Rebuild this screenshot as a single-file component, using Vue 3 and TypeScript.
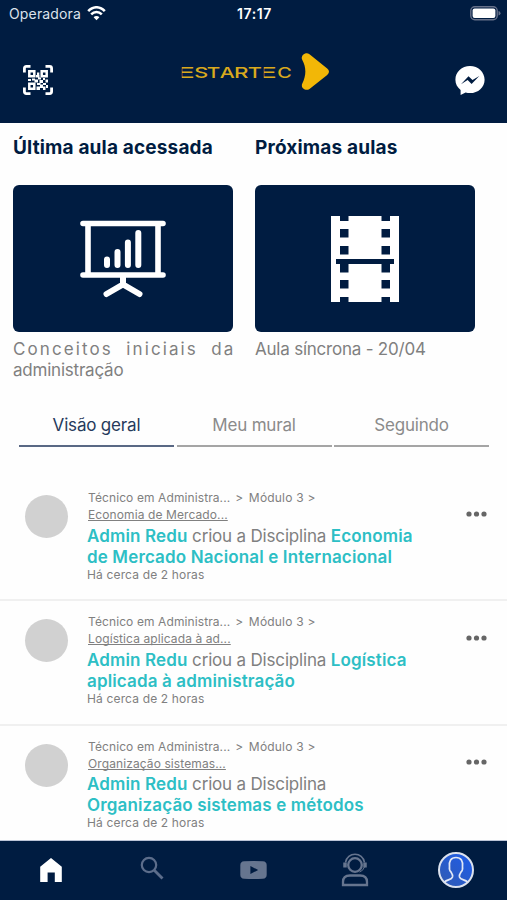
<script setup lang="ts">
interface Activity {
  subject: string
  title: string
}

interface Glyph {
  char: string
  x: number
  width: number
}

const activities: Activity[] = [
  { subject: 'Economia de Mercado...', title: 'Economia de Mercado Nacional e Internacional' },
  { subject: 'Logística aplicada à ad...', title: 'Logística aplicada à administração' },
  { subject: 'Organização sistemas...', title: 'Organização sistemas e métodos' },
]

const tabs = ['Visão geral', 'Meu mural', 'Seguindo']
const brand: Glyph[] = [
  { char: 'E', x: 0, width: 19 },
  { char: 'S', x: 18.2, width: 14 },
  { char: 'T', x: 30.7, width: 13.5 },
  { char: 'A', x: 43.8, width: 15 },
  { char: 'R', x: 58, width: 14.5 },
  { char: 'T', x: 71.7, width: 14.2 },
  { char: 'E', x: 82, width: 19 },
  { char: 'C', x: 101.3, width: 14.5 },
]
const holes = [0, 13, 30, 48, 64, 81]
</script>

<template>
  <div class="screen">
    <header class="header">
      <div class="status">
        <div class="carrier">
          <span>Operadora</span>
          <svg width="19" height="15" viewBox="0 0 19 15" fill="none" stroke="#fff" stroke-width="2.5">
            <path d="M1.2 5.2C6-.1 13-.1 17.8 5.2" />
            <path d="M4.2 8.4c3-3.2 7.6-3.2 10.6 0" />
            <path d="M9.5 14.2 6.6 11.2c1.6-1.6 4.2-1.6 5.8 0z" fill="#fff" stroke="none" />
          </svg>
        </div>
        <strong class="clock">17:17</strong>
        <svg class="battery" width="31" height="15" viewBox="0 0 31 15">
          <rect x=".8" y=".8" width="26.4" height="13" rx="4" fill="none" stroke="#66718a" stroke-width="1.4" />
          <rect x="2.6" y="2.6" width="22.8" height="9.4" rx="2" fill="#fff" />
          <path d="M28.5 5q2 .6 2 2.3t-2 2.3z" fill="#66718a" />
        </svg>
      </div>
      <div class="brandbar">
        <svg class="qr" width="30" height="30" viewBox="0 0 30 30">
          <g fill="none" stroke="#fff" stroke-width="2.8">
            <path d="M1.4 7.5V3.4q0-2 2-2h4.1M22.5 1.4h4.1q2 0 2 2v4.1M28.6 22.5v4.1q0 2-2 2h-4.1M7.5 28.6H3.4q-2 0-2-2v-4.1" />
            <path d="M6.3 6.3h5v5h-5zM18.7 6.3h5v5h-5zM6.3 18.7h5v5h-5z" stroke-width="2.5" />
          </g>
          <path d="M14 7.5h2.3v3H14zM13 10h3.5v2.5H13zM5 14h3v2H5zM9 13.5h3v2H9zM11.5 14.5H15v3h-3.5zM15 12.5h3v2h-3zM16.5 15H20v3h-3.5zM20 13h2v2h-2zM22.5 14.5H25v3h-2.5zM14 18h3.5v2H14zM20 18h3v2h-3zM13.5 21.5H17V25h-3.5zM17 19.5h3v3.5h-3zM20 21.5h2.5V25H20zM23 20h2v3h-2z" fill="#fff" />
        </svg>
        <div class="brand">
          <svg width="117" height="18" viewBox="0 0 117 18">
            <template v-for="(g, i) in brand" :key="i">
              <text v-if="g.char === 'E'" class="glyph" :x="g.x" y="14.5" :textLength="g.width" lengthAdjust="spacingAndGlyphs">{{ g.char }}</text>
              <rect v-if="g.char === 'E'" :x="g.x" y="2" width="5.8" height="14" fill="#001c41" />
            </template>
            <template v-for="(g, i) in brand" :key="i">
              <text v-if="g.char !== 'E'" class="glyph" :x="g.x" y="14.5" :textLength="g.width" lengthAdjust="spacingAndGlyphs">{{ g.char }}</text>
            </template>
          </svg>
          <svg width="29" height="38" viewBox="0 0 29 38">
            <path d="M8.5 1.2 26.2 15.5q3.6 3.2 0 6.4L8.5 35.9C4.5 38.5-.5 34.8 1.2 30.8 5.3 22.4 5.5 14.8 1.2 6.8-.8 2.6 4.6-1.7 8.5 1.2z" fill="#f2b707" />
          </svg>
        </div>
        <svg class="chat" width="30" height="31" viewBox="0 0 30 31">
          <path d="M15 1C6.8 1 .4 6.9.4 14.7c0 4.3 1.9 7.6 5.2 10.2v5.2l5-2.6c1.4.4 2.9.6 4.4.6 8.2 0 14.6-5.9 14.6-13.4S23.200 1 15 1z" fill="#fff" />
          <path d="m6 19.2 7.5-8 4 3.7 6.8-3.9-7.7 8-4-3.9z" fill="#001c41" />
        </svg>
      </div>
    </header>

    <main>
      <section class="lessons">
        <article>
          <h2>Última aula acessada</h2>
          <div class="tile">
            <svg width="86" height="78" viewBox="0 0 86 78" fill="none" stroke="#fff" stroke-width="6" stroke-linecap="round">
              <path d="M3 3.5h80M3 55h80M8 3.5V55M78 3.5V55" stroke-width="5.6" />
              <path d="M27 39.5v5.5M37.5 32v13M47.9 22.5V45M58.3 13V45" />
              <path d="M43 56v8M26.5 74 43 64.5 59.5 74" />
            </svg>
          </div>
          <p><span class="spread">Conceitos iniciais da</span><span>administração</span></p>
        </article>
        <article>
          <h2>Próximas aulas</h2>
          <div class="tile">
            <svg width="68" height="86" viewBox="0 0 68 86">
              <path d="M0 0h68v86H0z" fill="#fff" />
              <g fill="#001c41">
                <template v-for="y in holes" :key="y">
                  <rect x="9" :y="y" width="8.5" :height="y === 0 || y === 81 ? 5 : 8.5" />
                  <rect x="50.5" :y="y" width="8.5" :height="y === 0 || y === 81 ? 5 : 8.5" />
                </template>
                <rect x="5" y="43" width="58" height="5" />
              </g>
            </svg>
          </div>
          <p>Aula síncrona - 20/04</p>
        </article>
      </section>

      <nav class="tabs">
        <button v-for="(tab, i) in tabs" :key="tab" :class="{ active: i === 0 }">{{ tab }}</button>
      </nav>

      <section class="feed">
        <article v-for="item in activities" :key="item.subject" class="post">
          <div class="avatar"></div>
          <div class="body">
            <div class="crumbs"><span>Técnico em Administra...</span><span>&gt;</span><span class="module">Módulo 3 &gt;</span></div>
            <div class="subject">{{ item.subject }}</div>
            <div class="message"><b>Admin Redu</b> criou a Disciplina <b>{{ item.title }}</b></div>
            <div class="time">Há cerca de 2 horas</div>
          </div>
          <svg class="more" width="21" height="6" viewBox="0 0 21 6" fill="#666">
            <circle cx="3" cy="3" r="2.6" /><circle cx="10.5" cy="3" r="2.6" /><circle cx="18" cy="3" r="2.6" />
          </svg>
        </article>
      </section>
    </main>

    <footer class="bottom">
      <div><svg width="24" height="26" viewBox="0 0 24 26"><path d="M1.2 9.7 12 1l10.8 8.7V25h-7V15.6H8.6V25H1.2z" fill="#fff" /></svg></div>
      <div class="search"><svg width="24" height="24" viewBox="0 0 24 24" fill="none" stroke="#5c6d8b" stroke-width="2.2"><circle cx="9" cy="9" r="7.2" /><path d="m14 14 8.5 8.5" stroke-width="2.9" /></svg></div>
      <div><svg width="27" height="18" viewBox="0 0 26 18" preserveAspectRatio="none"><path fill-rule="evenodd" d="M4 .3Q13-.3 22 .3q3.7.3 3.7 4v9.4q0 3.7-3.7 4-9 .6-18 0-3.7-.3-3.7-4V4.3Q.3.6 4 .3zM10 5v8l7.5-4z" fill="#66758f" /></svg></div>
      <div><svg width="28" height="34" viewBox="0 0 28 34" fill="none" stroke="#66758f" stroke-width="2">
        <circle cx="14" cy="12" r="6.8" stroke-width="2.3" />
        <path d="M4.5 9.5C6-1.5 22-1.5 23.5 9.5" stroke-width="1.6" />
        <path d="M4 9.5v5M24 9.5v5" stroke-width="3.5" /><path d="M23.5 14q-1.5 4-5 5" stroke-width="1" />
        <path d="M2 32v-3q0-6.5 7-6.5h10q7 0 7 6.5v3z" stroke-width="2.3" />
      </svg></div>
      <div><svg width="38" height="38" viewBox="0 0 38 38" fill="none">
        <defs><linearGradient id="profile" x1="0" y1="1" x2="1" y2="0"><stop stop-color="#315aae" /><stop offset="1" stop-color="#1e5dee" /></linearGradient></defs>
        <circle cx="19" cy="19" r="17" fill="url(#profile)" stroke="#dce2ee" stroke-width="2" />
        <path d="M7.5 31c2.5-2.5 7-2 8-5 .5-2-.5-3.5-1.500-5-1.200-1-1.800-3-1.500-5-.8-6 1.500-9.500 6.500-9.500s7.300 3.500 6.500 9.500c.3 2-.3 4-1.500 5-1 1.500-2 3-1.500 5 1 3 5.500 2.500 8 5" stroke="#e2e8f6" stroke-width="1.7" />
      </svg></div>
    </footer>
  </div>
</template>

<style>
body { margin: 0; background: #fefefe; }
</style>

<style scoped>
* { box-sizing: border-box; }
svg { display: block; flex: none; }
.screen { width: 507px; height: 900px; overflow: hidden; display: flex; flex-direction: column; background: #fefefe; font-family: Inter, "Liberation Sans", sans-serif; color: #808080; }
.header { flex: none; height: 123px; background: #001c41; color: #fff; }
.status { height: 27px; display: grid; grid-template-columns: 1fr 60px 1fr; align-items: center; padding: 0 6px 0 9px; }
.carrier { display: flex; gap: 6px; align-items: center; font-size: 14px; letter-spacing: .15px; color: #dce2eb; }
.clock { text-align: center; font-size: 14px; font-weight: 600; letter-spacing: .6px; margin-right: 1px; }
.battery { justify-self: end; }
.brandbar { height: 96px; display: flex; align-items: flex-start; justify-content: space-between; padding: 26px 22px 0 23px; }
.qr, .chat { margin-top: 12px; }
.brand { display: flex; align-items: center; gap: 8px; margin-left: -3px; }
.glyph { font-size: 15px; font-weight: 500; fill: #d9a91d; }
main { flex: 1; min-height: 0; overflow: hidden; }
.lessons { display: grid; grid-template-columns: 220px 220px; column-gap: 22px; padding: 12px 0 0 13px; height: 279px; }
h2 { margin: 0 0 24px; height: 26px; line-height: 26px; font-size: 19px; letter-spacing: .16px; font-weight: 700; color: #001c41; white-space: nowrap; }
.tile { height: 147px; border-radius: 6px; background: #001c41; display: flex; align-items: center; justify-content: center; }
p { margin: 7px 0 0; font-size: 17px; line-height: 21px; letter-spacing: -.22px; white-space: nowrap; }
p span { display: block; }
.spread { width: 222.5px; letter-spacing: 2.1px; text-align: justify; text-align-last: justify; }
.tabs { display: grid; grid-template-columns: repeat(3, 155px); column-gap: 2.5px; padding-left: 19px; height: 45px; }
.tabs button { padding: 2px 0 0; border: 0; border-bottom: 2px solid #a5a5a5; background: none; font: 400 17px Inter, sans-serif; letter-spacing: -.18px; color: #8b8b8b; }
.tabs .active { color: #263a5c; border-color: #596884; }
.feed { padding-top: 30px; }
.post { height: 124.3px; display: flex; padding: 12px 20px 0 25px; border-bottom: 2px solid #f0f0f0; }
.avatar { flex: none; width: 43px; height: 43px; margin-top: 6px; border-radius: 50%; background: #d1d1d1; }
.body { width: 340px; margin-left: 19px; }
.crumbs { display: flex; gap: 5px; padding-left: 1px; font-size: 12px; line-height: 17px; letter-spacing: .1px; }
.module { margin-left: .5px; letter-spacing: .2px; }
.subject { width: max-content; margin-left: 1px; font-size: 12px; line-height: 17px; letter-spacing: .1px; text-decoration: underline; text-decoration-skip-ink: none; }
.message { font-size: 17px; line-height: 21px; margin-top: 2.5px; letter-spacing: -.18px; }
.message b { font-weight: 600; letter-spacing: .14px; color: #2dbfc5; }
.time { font-size: 12px; line-height: 14px; letter-spacing: .15px; }
.more { margin: 21.5px 0 0 auto; }
.bottom { flex: none; height: 60px; padding-bottom: 2px; border-top: 1px solid #bbc4d7; background: #001c41; display: grid; grid-template-columns: repeat(5, 1fr); place-items: center; }
.search { padding-bottom: 3px; }
</style>
